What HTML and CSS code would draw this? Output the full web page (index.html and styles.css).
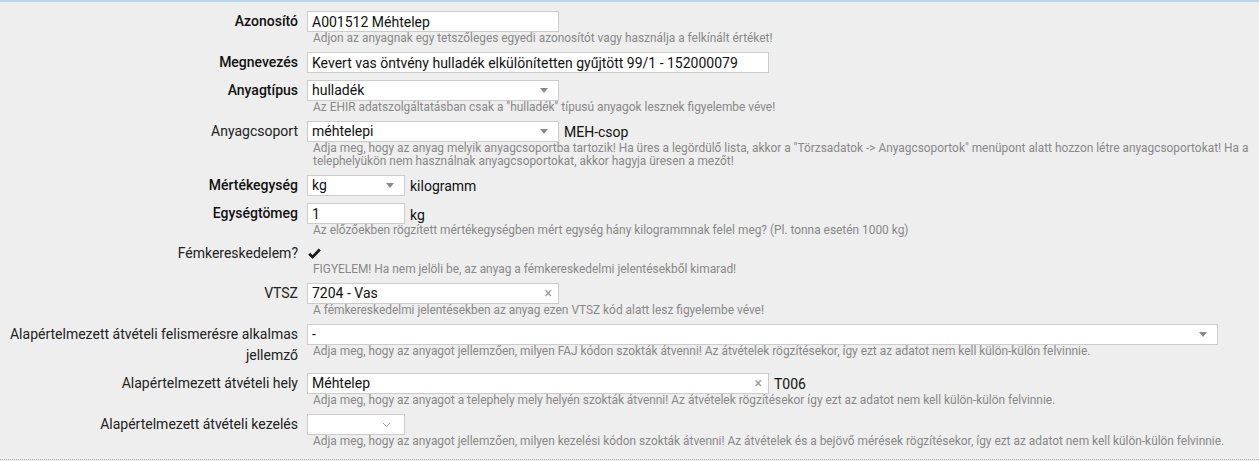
FILE: index.html
```html
<!DOCTYPE html>
<html lang="hu">
<head>
<meta charset="UTF-8">
<title>Anyag szerkesztése</title>
<link rel="stylesheet" href="styles.css">
</head>
<body>
<div class="form">

<div class="row">
  <div class="lbl strong">Azonosító</div>
  <div class="field">
    <div class="ctrl"><input class="inp w250" type="text" value="A001512 Méhtelep"></div>
    <div class="help">Adjon az anyagnak egy tetszőleges egyedi azonosítót vagy használja a felkínált értéket!</div>
  </div>
</div>

<div class="row">
  <div class="lbl strong">Megnevezés</div>
  <div class="field">
    <div class="ctrl"><input class="inp w460" type="text" value="Kevert vas öntvény hulladék elkülönítetten gyűjtött 99/1 - 152000079"></div>
  </div>
</div>

<div class="row">
  <div class="lbl strong">Anyagtípus</div>
  <div class="field">
    <div class="ctrl">
      <div class="sel w250"><span>hulladék</span><i class="caret"></i></div>
    </div>
    <div class="help">Az EHIR adatszolgáltatásban csak a "hulladék" típusú anyagok lesznek figyelembe véve!</div>
  </div>
</div>

<div class="row">
  <div class="lbl">Anyagcsoport</div>
  <div class="field">
    <div class="ctrl">
      <div class="sel w250"><span>méhtelepi</span><i class="caret"></i></div>
      <span class="suffix">MEH-csop</span>
    </div>
    <div class="help">Adja meg, hogy az anyag melyik anyagcsoportba tartozik! Ha üres a legördülő lista, akkor a "Törzsadatok -&gt; Anyagcsoportok" menüpont alatt hozzon létre anyagcsoportokat! Ha a telephelyükön nem használnak anyagcsoportokat, akkor hagyja üresen a mezőt!</div>
  </div>
</div>

<div class="row">
  <div class="lbl strong">Mértékegység</div>
  <div class="field">
    <div class="ctrl">
      <div class="sel w97"><span>kg</span><i class="caret"></i></div>
      <span class="suffix">kilogramm</span>
    </div>
  </div>
</div>

<div class="row">
  <div class="lbl strong">Egységtömeg</div>
  <div class="field">
    <div class="ctrl low">
      <input class="inp w97" type="text" value="1">
      <span class="suffix">kg</span>
    </div>
    <div class="help">Az előzőekben rögzített mértékegységben mért egység hány kilogrammnak felel meg? (Pl. tonna esetén 1000 kg)</div>
  </div>
</div>

<div class="row">
  <div class="lbl check-lbl">Fémkereskedelem?</div>
  <div class="field">
    <div class="ctrl check">
      <svg width="13" height="11" viewBox="0 0 13 11"><path d="M1.2 5.8 L4.6 9 L11.8 1.6" fill="none" stroke="#1a1a1a" stroke-width="2.8"/></svg>
    </div>
    <div class="help">FIGYELEM! Ha nem jelöli be, az anyag a fémkereskedelmi jelentésekből kimarad!</div>
  </div>
</div>

<div class="row">
  <div class="lbl">VTSZ</div>
  <div class="field">
    <div class="ctrl">
      <div class="sel w250"><span>7204 - Vas</span><i class="clear">×</i></div>
    </div>
    <div class="help">A fémkereskedelmi jelentésekben az anyag ezen VTSZ kód alatt lesz figyelembe véve!</div>
  </div>
</div>

<div class="row">
  <div class="lbl">Alapértelmezett átvételi felismerésre alkalmas jellemző</div>
  <div class="field">
    <div class="ctrl">
      <div class="sel w910"><span>-</span><i class="caret"></i></div>
    </div>
    <div class="help">Adja meg, hogy az anyagot jellemzően, milyen FAJ kódon szokták átvenni! Az átvételek rögzítésekor, így ezt az adatot nem kell külön-külön felvinnie.</div>
  </div>
</div>

<div class="row">
  <div class="lbl">Alapértelmezett átvételi hely</div>
  <div class="field">
    <div class="ctrl">
      <div class="sel w460"><span>Méhtelep</span><i class="clear">×</i></div>
      <span class="suffix">T006</span>
    </div>
    <div class="help">Adja meg, hogy az anyagot a telephely mely helyén szokták átvenni! Az átvételek rögzítésekor így ezt az adatot nem kell külön-külön felvinnie.</div>
  </div>
</div>

<div class="row">
  <div class="lbl">Alapértelmezett átvételi kezelés</div>
  <div class="field">
    <div class="ctrl">
      <div class="sel w97"><span></span>
        <svg class="chev" width="9" height="6" viewBox="0 0 9 6"><path d="M1 1 L4.5 4.5 L8 1" fill="none" stroke="#999" stroke-width="1"/></svg>
      </div>
    </div>
    <div class="help">Adja meg, hogy az anyagot jellemzően, milyen kezelési kódon szokták átvenni! Az átvételek és a bejövő mérések rögzítésekor, így ezt az adatot nem kell külön-külön felvinnie.</div>
  </div>
</div>

</div>
</body>
</html>
```

FILE: styles.css
```css
body {
  margin: 0;
  background-color: #eeeeee;
  font-family: Roboto, "Liberation Sans", sans-serif;
  color: #222;
}

.form {
  border-top: 2px solid #bcd7e2;
  border-bottom: 1px dotted #a8a8a8;
  padding: 9px 8px 4px 8px;
}

.row {
  display: grid;
  grid-template-columns: 290px 1fr;
  column-gap: 9px;
  margin-bottom: 7px;
}

.lbl {
  font-size: 14px;
  line-height: 21px;
  text-align: right;
  color: #222;
}

.lbl.strong {
  font-weight: 500;
  color: #111;
}

.check-lbl {
  line-height: 19px;
}

.ctrl {
  display: flex;
  align-items: center;
  gap: 5px;
  height: 21px;
}

.ctrl.low {
  align-items: flex-end;
}

.ctrl.check {
  height: 19px;
  padding-left: 1px;
}

.inp,
.sel {
  box-sizing: border-box;
  height: 21px;
  margin: 0;
  padding: 0 4px;
  border: 1px solid #cccccc;
  background-color: #fff;
  font-family: Roboto, "Liberation Sans", sans-serif;
  font-size: 14px;
  color: #111;
  outline: none;
}

.sel {
  display: flex;
  align-items: center;
  justify-content: space-between;
  line-height: 19px;
}

.w97 { width: 98px; }
.w250 { width: 252px; }
.w460 { width: 462px; }
.w910 { width: 911px; }

.caret {
  width: 0;
  height: 0;
  margin-right: 6px;
  border-left: 4px solid transparent;
  border-right: 4px solid transparent;
  border-top: 5px solid #8a8a8a;
}

.clear {
  font-style: normal;
  font-size: 14px;
  color: #999;
  margin-right: 2px;
}

.chev {
  margin-right: 9px;
}

.suffix {
  font-size: 14px;
  color: #111;
}

.ctrl.low .suffix {
  line-height: 17px;
}

.help {
  font-size: 11.9px;
  line-height: 13px;
  color: #888;
  padding-left: 6px;
}
```
